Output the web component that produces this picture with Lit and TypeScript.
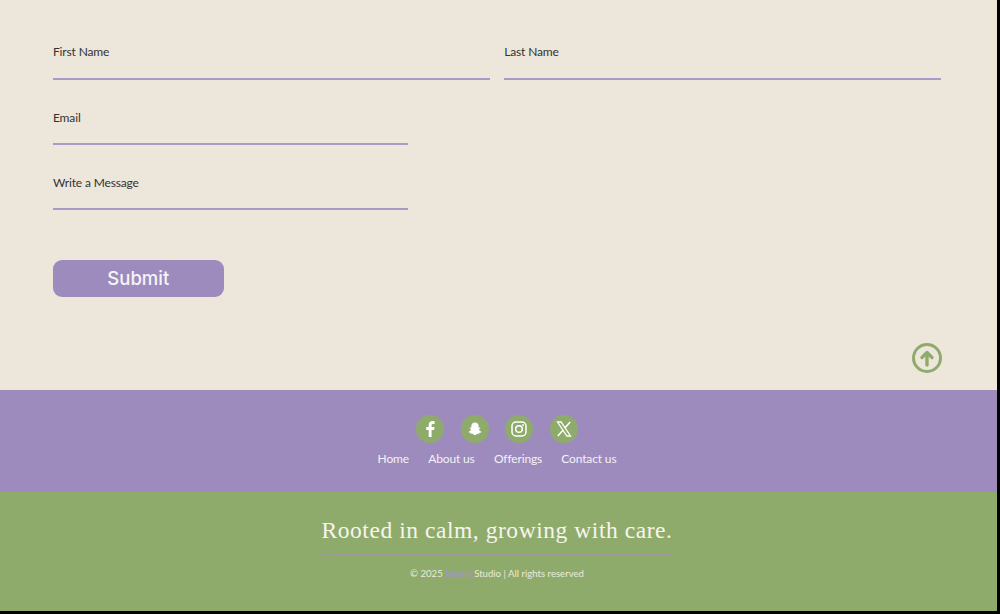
import { LitElement, html, css } from "lit";
import { customElement } from "lit/decorators.js";

@customElement("app-root")
export class AppRoot extends LitElement {
  static styles = css`
    :host { display: block; width: 1000px; height: 614px; background: #000; font-family: "Lato", "Liberation Sans", sans-serif; overflow: hidden; }
    .page { width: 997px; height: 611px; display: flex; flex-direction: column; }
    .contact { height: 390px; box-sizing: border-box; background: #ede6da; padding: 44px 56px 0 52.500px; display: flex; flex-direction: column; }
    .row { display: flex; gap: 14px; }
    .field { height: 36px; box-sizing: border-box; border-bottom: 2px solid #a99ac8; color: #333; font-size: 12px; letter-spacing: -.15px; line-height: 16px; padding-left: .5px; }
    .half { flex: 1; }
    .single { width: 355.500px; height: 35px; margin-top: 30px; }
    .submit { width: 171.500px; height: 37px; margin-top: 50px; border: none; border-radius: 9px; background: #9d8bbd; color: #f7f3fa; font: 500 18.500px/37px "Inter", sans-serif; padding: 0; }
    .up { align-self: flex-end; margin: 46px -1px 0 0; width: 30px; height: 30px; display: block; }
    .links { height: 102px; box-sizing: border-box; background: #9d8bbd; padding: 25px 3px 0 0; display: flex; flex-direction: column; align-items: center; gap: 8px; }
    .icons { display: flex; gap: 16.600px; }
    .icon { width: 28px; height: 28px; border-radius: 50%; background: #8fab6b; display: flex; align-items: center; justify-content: center; }
    .nav { display: flex; gap: 19.300px; color: #f5f1f8; font-size: 12px; letter-spacing: -.15px; line-height: 16px; }
    .brand { flex: 1; background: #8fab6b; display: flex; flex-direction: column; align-items: center; padding: 24px 3px 0 0; color: #f6f5ee; }
    .tag { font: 23.500px/28px "Liberation Serif", serif; letter-spacing: .55px; padding: 0 0 10px; border-bottom: 1px solid #9c9c98; }
    .copy { margin-top: 11px; font-size: 9.600px; line-height: 16px; color: #e9eadf; }
    .copy span { color: #a596c4; }
  `;

  render() {
    return html`<div class="page">
      <section class="contact">
        <div class="row">
          <div class="field half">First Name</div>
          <div class="field half">Last Name</div>
        </div>
        <div class="field single">Email</div>
        <div class="field single">Write a Message</div>
        <button class="submit">Submit</button>
        <svg class="up" viewBox="0 0 30 30" fill="none" stroke="#8fab6b" stroke-linecap="round" stroke-linejoin="round" role="img" aria-label="Back to top">
          <circle cx="15" cy="15" r="13.500" stroke-width="3"/>
          <path stroke-width="3.400" d="M15 22V9.500M10 14.500l5-5 5 5"/>
        </svg>
      </section>
      <section class="links">
        <div class="icons">
          <div class="icon"><svg width="18" height="18" viewBox="0 0 18 18" fill="#fff"><path d="M10.600 17V10h2.500l.4-2.900h-2.900V5.400c0-.9.3-1.400 1.500-1.400h1.500V1.300C13.300 1.200 12.500 1.100 11.600 1.100 9.300 1.100 7.700 2.500 7.700 5v2.100H5.200V10h2.500v7z"/></svg></div>
          <div class="icon"><svg width="16" height="16" viewBox="0 0 16 16" fill="#fff"><path d="M8 1.500c2.300 0 3.700 1.700 3.700 3.800v1.500l1.300-.3.400.7-1.500 1c.4 1.200 1.200 2 2.400 2.500l-.1.700-1.700.4-.4 1-1.500-.1c-.9.200-1.500 1.300-2.600 1.300s-1.700-1.100-2.600-1.300l-1.500.1-.4-1-1.700-.4-.1-.7c1.200-.5 2-1.300 2.400-2.500l-1.500-1 .4-.7 1.300.3V5.300C4.300 3.200 5.700 1.500 8 1.500z"/></svg></div>
          <div class="icon"><svg width="18" height="18" viewBox="0 0 18 18" fill="none" stroke="#fff" stroke-width="1.500"><rect x="2" y="2" width="14" height="14" rx="4"/><circle cx="9" cy="9" r="3.300"/><circle cx="13" cy="5" r=".6" fill="#fff" stroke-width=".8"/></svg></div>
          <div class="icon"><svg width="18" height="18" viewBox="0 0 18 18" fill="none" stroke="#fff"><path stroke-width="1.300" d="M2.500 2h3.600l9.400 14h-3.600z"/><path stroke-width="1.500" d="M15.200 2 9.800 8M8 10.200 2.800 16"/></svg></div>
        </div>
        <nav class="nav"><span>Home</span><span>About us</span><span>Offerings</span><span>Contact us</span></nav>
      </section>
      <section class="brand">
        <div class="tag">Rooted in calm, growing with care.</div>
        <div class="copy">© 2025 <span>Isibela</span> Studio | All rights reserved</div>
      </section>
    </div>`;
  }
}
